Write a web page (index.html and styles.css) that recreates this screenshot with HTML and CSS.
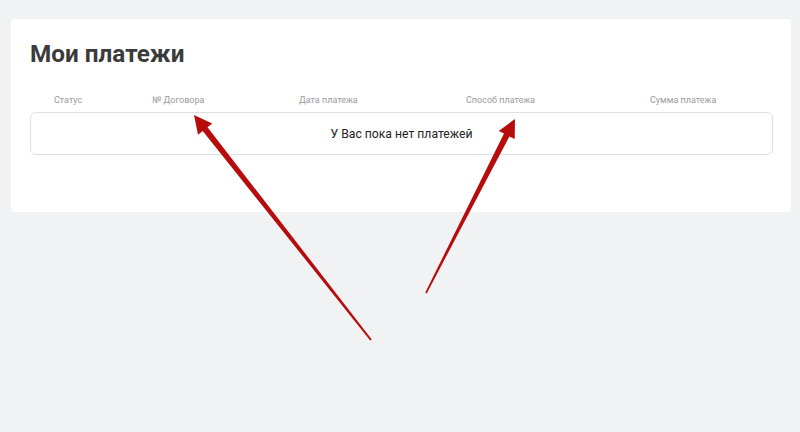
FILE: index.html
```html
<!DOCTYPE html>
<html lang="ru">
<head>
<meta charset="utf-8">
<title>Мои платежи</title>
<link rel="stylesheet" href="styles.css">
</head>
<body>
<div class="card">
  <h1 class="title">Мои платежи</h1>
  <div class="table-head">
    <div class="col">Статус</div>
    <div class="col">№ Договора</div>
    <div class="col">Дата платежа</div>
    <div class="col">Способ платежа</div>
    <div class="col">Сумма платежа</div>
  </div>
  <div class="empty">У Вас пока нет платежей</div>
</div>
<svg class="arrows" width="800" height="432" viewBox="0 0 800 432">
  <polygon fill="#b80b0b" points="194,115 212.2,123.6 207.5,127.3 371.8,339.4 370.2,340.6 202.7,131.0 198.0,134.7"/>
  <polygon fill="#b80b0b" points="515,119 514.7,139.1 509.4,136.4 426.7,293.4 425.3,292.6 504.0,133.6 498.7,130.9"/>
</svg>
</body>
</html>
```

FILE: styles.css
```css
html, body {
  margin: 0;
  padding: 0;
}
body {
  background: #f1f2f4;
  font-family: Roboto, "Liberation Sans", sans-serif;
  width: 800px;
  height: 432px;
  position: relative;
  overflow: hidden;
}
.card {
  margin: 19px 0 0 11px;
  width: 780px;
  height: 193px;
  box-sizing: border-box;
  background: #ffffff;
  border-radius: 4px;
  padding: 21px 18px 0 19px;
}
.title {
  margin: 0;
  font-size: 24.3px;
  line-height: 28px;
  font-weight: 700;
  color: #3b3b3b;
}
.table-head {
  display: grid;
  grid-template-columns: 98px 147px 167px 184px 1fr;
  padding-left: 24px;
  margin-top: 26px;
  font-size: 9px;
  line-height: 12px;
  color: #9a9a9a;
}
.empty {
  margin-top: 6px;
  height: 43px;
  box-sizing: border-box;
  border: 1px solid #e0e0e0;
  border-radius: 6px;
  display: flex;
  align-items: center;
  justify-content: center;
  font-size: 12.2px;
  color: #222222;
}
.arrows {
  position: absolute;
  left: 0;
  top: 0;
}
```
